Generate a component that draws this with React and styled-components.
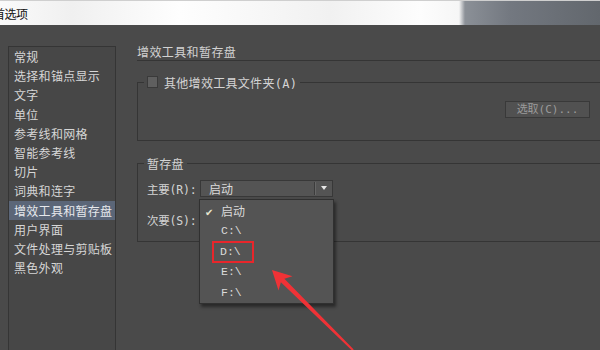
import React from "react";
import styled, { createGlobalStyle } from "styled-components";

const CJK = `"Noto Sans CJK SC", "Noto Sans", sans-serif`;
const MONO = `"DejaVu Sans Mono", "Noto Sans CJK SC", monospace`;
const SERIF_MONO = `"Liberation Mono", "Noto Sans CJK SC", monospace`;

const PAGES = [
  "常规",
  "选择和锚点显示",
  "文字",
  "单位",
  "参考线和网格",
  "智能参考线",
  "切片",
  "词典和连字",
  "增效工具和暂存盘",
  "用户界面",
  "文件处理与剪贴板",
  "黑色外观",
];
const ACTIVE = "增效工具和暂存盘";
const DRIVES = ["启动", "C:\\", "D:\\", "E:\\", "F:\\"];

/**
 * 首选项 — 增效工具和暂存盘
 */
export default () => (
  <>
    <GlobalStyle />
    <Window>
      <TitleBar>
        <Title>首选项</Title>
      </TitleBar>
      <Body>
        <Sidebar>
          {PAGES.map((p) => (
            <NavItem key={p} $active={p === ACTIVE}>
              {p}
            </NavItem>
          ))}
        </Sidebar>
        <Main>
          <Heading>增效工具和暂存盘</Heading>
          <Group>
            <Legend>
              <Checkbox />
              其他增效工具文件夹(A)
            </Legend>
            <ButtonRow>
              <Button disabled>选取(C)...</Button>
            </ButtonRow>
          </Group>
          <Group $second>
            <Legend>暂存盘</Legend>
            <Row>
              <Label>主要(R):</Label>
              <SelectWrap>
                <Select>
                  启动
                  <Caret />
                </Select>
                <Menu>
                  {DRIVES.map((d, i) => (
                    <MenuItem key={d} $mono={i > 0}>
                      {i === 0 && <Check>✔</Check>}
                      <MenuText $marked={d === "D:\\"}>{d}</MenuText>
                    </MenuItem>
                  ))}
                </Menu>
              </SelectWrap>
            </Row>
            <Row>
              <Label>次要(S):</Label>
              <Select>
                <Caret />
              </Select>
            </Row>
          </Group>
        </Main>
      </Body>
      <Arrow viewBox="0 0 95 92" width="95" height="92">
        <path
          d="M10 10 L30.5 16.2 L22.4 18.8 L91.7 89.4 L90.3 90.8 L18.9 22.3 L16.5 30.5 Z"
          fill="#ef3236"
        />
      </Arrow>
    </Window>
  </>
);

const GlobalStyle = createGlobalStyle`
  body {
    margin: 0;
    background: #4a4a4a;
    overflow: hidden;
  }
`;

const Window = styled.div`
  position: relative;
  width: 600px;
  height: 350px;
  overflow: hidden;
  display: flex;
  flex-direction: column;
  background: #4a4a4a;
  font-family: ${CJK};
`;

const TitleBar = styled.div`
  height: 24px;
  border-top: 1px solid #cfcfcf;
  display: flex;
  align-items: center;
  background: linear-gradient(
    90deg,
    #fafafa 0%,
    #f0f0f0 12%,
    #fefefe 30%,
    #f1f1f1 55%,
    #fdfdfd 70%,
    #f6f6f6 76.5%,
    #8b9097 77.5%,
    #737880 85%,
    #62676d 100%
  );
`;

const Title = styled.div`
  margin-left: -7px;
  font-size: 12px;
  color: #111;
  letter-spacing: -0.5px;
`;

const Body = styled.div`
  flex: 1;
  display: flex;
  min-height: 0;
`;

const Sidebar = styled.div`
  margin: 21px 0 0 8px;
  width: 106px;
  height: 320px;
  border: 1px solid #353535;
  background: #474747;
  display: flex;
  flex-direction: column;
  flex-shrink: 0;
`;

const NavItem = styled.div`
  height: 19.2px;
  line-height: 19.2px;
  padding-left: 5px;
  font-size: 12px;
  letter-spacing: 0.3px;
  white-space: nowrap;
  color: ${(p) => (p.$active ? "#e6e8ec" : "#d6d6d6")};
  background: ${(p) => (p.$active ? "#5b6678" : "transparent")};
`;

const Main = styled.div`
  flex: 1;
  padding: 19px 0 0 21px;
  color: #d2d2d2;
  font-size: 12px;
`;

const Heading = styled.div`
  height: 16px;
  line-height: 16px;
  letter-spacing: 0.4px;
  border-bottom: 1px solid #353535;
  margin-right: -4px;
`;

const Group = styled.fieldset`
  margin: ${(p) => (p.$second ? "14px" : "13px")} -2px 0 0;
  padding: ${(p) => (p.$second ? "9px 9px 13px" : "11px 11px 22px 9px")};
  border: 1px solid #353535;
  min-width: 0;
`;

const Legend = styled.legend`
  display: flex;
  align-items: center;
  height: 16px;
  padding: 0 3px;
  margin-left: -3px;
  font-family: ${MONO};
  font-size: 12px;
  letter-spacing: 0.3px;
  color: #d4d4d4;
`;

const Checkbox = styled.span`
  width: 9px;
  height: 10px;
  margin-right: 6px;
  background: #5f5f5f;
  border: 1px solid #3a3a3a;
`;

const ButtonRow = styled.div`
  display: flex;
  justify-content: flex-end;
`;

const Button = styled.button`
  width: 85px;
  height: 17px;
  padding: 0;
  background: #515151;
  border: 1px solid #393939;
  color: #9b9b9b;
  font-family: ${MONO};
  font-size: 11px;
  line-height: 15px;
`;

const Row = styled.div`
  display: flex;
  align-items: center;
  height: 17px;
  & + & {
    margin-top: 14px;
  }
`;

const Label = styled.div`
  width: 53px;
  flex-shrink: 0;
  font-family: ${MONO};
  font-size: 11.5px;
  letter-spacing: -0.2px;
  white-space: nowrap;
  color: #d4d4d4;
`;

const SelectWrap = styled.div`
  position: relative;
  z-index: 2;
`;

const Select = styled.div`
  position: relative;
  box-sizing: border-box;
  width: 133px;
  height: 17px;
  padding-left: 8px;
  line-height: 15px;
  background: #545454;
  border: 1px solid #383838;
  color: #dadada;
  font-size: 12px;
`;

const Caret = styled.span`
  position: absolute;
  right: 0;
  top: 1px;
  width: 17px;
  height: 13px;
  border-left: 1px solid #3c3c3c;
  box-shadow: inset 1px 0 0 #666;
  &::after {
    content: "";
    position: absolute;
    left: 6px;
    top: 4px;
    border-left: 3.5px solid transparent;
    border-right: 3.5px solid transparent;
    border-top: 4px solid #e6e6e6;
  }
`;

const Menu = styled.div`
  position: absolute;
  left: -1px;
  top: 19px;
  width: 135px;
  box-sizing: border-box;
  padding: 0;
  background: #545454;
  border: 1px solid #303030;
  box-shadow: 2px 3px 3px rgba(0, 0, 0, 0.45);
`;

const MenuItem = styled.div`
  position: relative;
  height: 20.5px;
  display: flex;
  align-items: center;
  padding-left: 21px;
  font-family: ${(p) => (p.$mono ? SERIF_MONO : CJK)};
  font-size: ${(p) => (p.$mono ? "11.5px" : "12px")};
  color: #dadada;
`;

const Check = styled.span`
  position: absolute;
  left: 5px;
  top: 4px;
  font-size: 10px;
  color: #e8e6cf;
`;

const MenuText = styled.span`
  display: inline-block;
  ${(p) =>
    p.$marked &&
    `
    box-sizing: border-box;
    width: 42px;
    height: 22px;
    line-height: 18px;
    margin: 2px 0 0 -9px;
    padding-left: 6px;
    border: 2px solid #e8262b;
  `}
`;

const Arrow = styled.svg`
  position: absolute;
  left: 262px;
  top: 260px;
  z-index: 3;
`;
